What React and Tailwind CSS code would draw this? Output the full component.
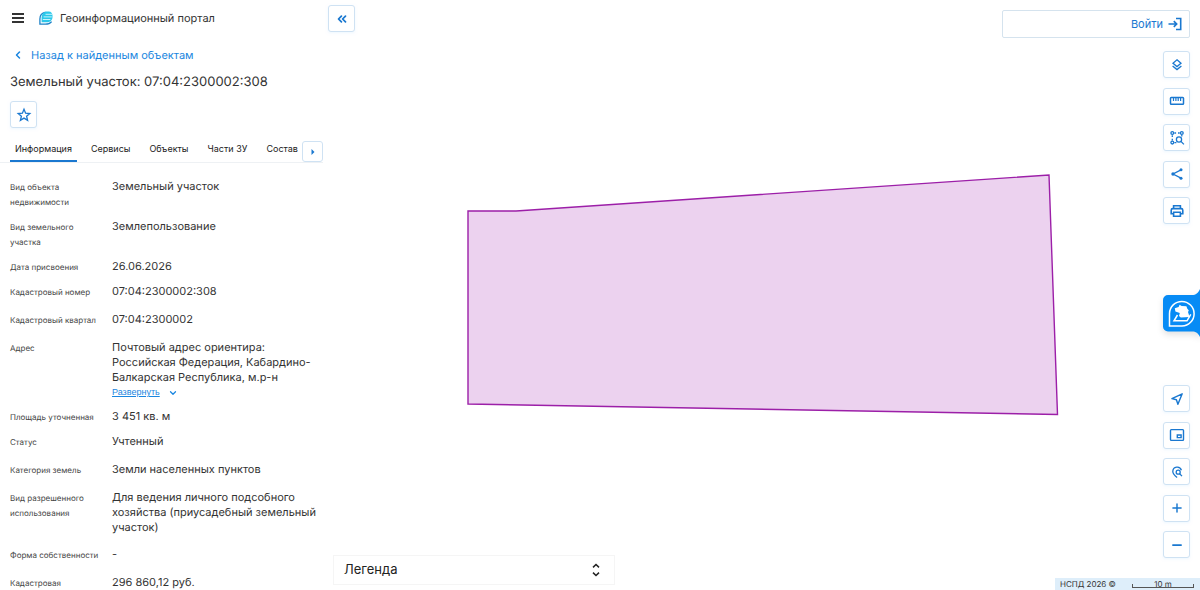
import { ChevronDown, ChevronLeft, ChevronsLeft, Minus, Plus } from 'lucide-react';

const tabs = ['Информация', 'Сервисы', 'Объекты', 'Части ЗУ', 'Состав'];

const details = [
  { label: 'Вид объекта недвижимости', value: 'Земельный участок', compact: true },
  { label: 'Вид земельного участка', value: 'Землепользование', compact: true },
  { label: 'Дата присвоения', value: '26.06.2026', compact: true },
  { label: 'Кадастровый номер', value: '07:04:2300002:308' },
  { label: 'Кадастровый квартал', value: '07:04:2300002' },
  {
    label: 'Адрес',
    value: 'Почтовый адрес ориентира: Российская Федерация, Кабардино-Балкарская Республика, м.р-н',
    compact: true,
    expandable: true,
  },
  { label: 'Площадь уточненная', value: '3 451 кв. м', compact: true },
  { label: 'Статус', value: 'Учтенный' },
  { label: 'Категория земель', value: 'Земли населенных пунктов' },
  {
    label: 'Вид разрешенного использования',
    value: 'Для ведения личного подсобного хозяйства (приусадебный земельный участок)',
  },
  { label: 'Форма собственности', value: '-' },
  { label: 'Кадастровая', value: '296 860,12 руб.' },
];

const iconProps = {
  viewBox: '0 0 16 16',
  fill: 'none',
  stroke: 'currentColor',
  strokeWidth: 1.4,
  className: 'w-4 h-4',
  'aria-hidden': true,
};

function LayersIcon() {
  return (
    <svg {...iconProps} strokeWidth={1.3}>
      <path d="M8 2.800 12 6.200 8 9.600 4 6.200Z" />
      <path d="M3.600 8.900 8 12.600 12.400 8.900" />
    </svg>
  );
}

function RulerIcon() {
  return (
    <svg {...iconProps} strokeWidth={1.5}>
      <rect x="1.500" y="4.500" width="13" height="6.800" rx="0.800" />
      <path d="M4.500 5v3M6.900 5v3M9.200 5v3M11.600 5v3" strokeWidth="1.200" />
    </svg>
  );
}

function AreaSearchIcon() {
  return (
    <svg {...iconProps} strokeWidth={1.3}>
      <circle cx="3.300" cy="3" r="1.400" />
      <circle cx="12.800" cy="3" r="1.400" />
      <circle cx="3.300" cy="12.600" r="1.400" />
      <path d="M5.400 3h1.700M9 3h1.700M3.300 5.200v1.700M3.300 8.800v1.700M12.800 5v1.400M5.400 12.600h2" />
      <circle cx="10" cy="9.500" r="2.600" />
      <path d="m11.900 11.400 3 3" />
    </svg>
  );
}

function ShareIcon() {
  return (
    <svg {...iconProps} strokeWidth={1.3}>
      <path d="M12 3.800 4 8l8 4.200" />
      <circle cx="12" cy="3.800" r="1.500" fill="currentColor" stroke="none" />
      <circle cx="4" cy="8" r="1.700" fill="currentColor" stroke="none" />
      <circle cx="12" cy="12.200" r="1.500" fill="currentColor" stroke="none" />
    </svg>
  );
}

function PrintIcon() {
  return (
    <svg {...iconProps} strokeWidth={1.6}>
      <path d="M4.600 5.500V2.800h6.800v2.700" />
      <path d="M4.400 10.800H2.200V7.200c0-1 .6-1.600 1.600-1.600h8.400c1 0 1.600.6 1.600 1.600v3.600h-2.200" />
      <path d="M4.600 9.200h6.800v4H4.600z" />
    </svg>
  );
}

function LocateIcon() {
  return (
    <svg {...iconProps}>
      <path d="M13.200 2.800 2.900 7.600l4.500 1.100 1.500 4.600Z" strokeLinejoin="round" />
    </svg>
  );
}

function OverviewIcon() {
  return (
    <svg {...iconProps}>
      <rect x="1.500" y="2.600" width="13" height="10.800" rx="0.800" />
      <path d="M8.300 8h3.800v2.600H8.300z" />
    </svg>
  );
}

function PinSearchIcon() {
  return (
    <svg {...iconProps} strokeWidth={1.3}>
      <path d="M12.400 6.200A4.400 4.400 0 0 0 3.800 7.400c0 2.400 2 4.200 4.300 6" />
      <circle cx="9.200" cy="8.200" r="2" />
      <path d="m10.600 9.700 2.400 2.400" />
    </svg>
  );
}

function PortalLogo() {
  return (
    <svg viewBox="0 0 16 16" className="w-4 h-4" fill="none" aria-hidden="true">
      <path d="M7.600 2.200C4 2.900 1.900 5.600 1.900 9v5.200h5.400c2.800 0 5-.9 6.300-2.600" stroke="#1f83c8" strokeWidth="1.300" />
      <path
        d="M8.200 1.400h2.600c2.300 0 3.700 1.700 3.700 4v1.300c0 3.100-2 5.500-5.200 5.500H3.600V7.400c0-3.300 1.700-5.600 4.600-6Z"
        fill="#2cc8ea"
      />
      <path d="M7.500 4.300h6.800M5.600 6.900h8.200M4.800 9.500h7.600" stroke="#d9f7ff" strokeWidth="0.900" />
    </svg>
  );
}

function MapButton({ label, children }) {
  return (
    <button
      type="button"
      aria-label={label}
      className="w-[27px] h-[27px] shrink-0 flex items-center justify-center bg-white border border-[#cfe2f3] rounded-[3px] shadow-sm shadow-sky-50 text-[#1a78d0]"
    >
      {children}
    </button>
  );
}

function DetailRow({ item }) {
  return (
    <div className={`flex ${item.compact ? 'pb-[9px]' : 'pb-3'}`}>
      <dt className="w-[102px] shrink-0 pt-px pr-2 text-[8px] leading-[15px] text-[#454545]">{item.label}</dt>
      <dd className="flex-1 min-w-0 text-[11px] leading-[15px] text-[#333]">
        {item.value}
        {item.expandable && (
          <button
            type="button"
            className="flex items-center gap-2 h-[15px] font-['Liberation_Sans'] text-[9px] text-[#1a86e0]"
          >
            <span className="underline">Развернуть</span>
            <ChevronDown className="w-2.5 h-2.5" strokeWidth={3} />
          </button>
        )}
      </dd>
    </div>
  );
}

function Sidebar() {
  return (
    <aside className="w-[323px] shrink-0 overflow-hidden">
      <header className="flex items-center h-9 pl-3">
        <button type="button" aria-label="Меню" className="w-3 h-3 mr-[14px] flex flex-col justify-center gap-[2px]">
          <span className="w-full h-0.5 bg-[#333]" />
          <span className="w-full h-0.5 bg-[#333]" />
          <span className="w-full h-0.5 bg-[#333]" />
        </button>
        <PortalLogo />
        <span className="ml-[6px] text-[11px] text-[#333]">Геоинформационный портал</span>
      </header>

      <a href="#results" className="flex items-center gap-[7px] h-[38px] pl-3 text-[11px] text-[#1a86e0]">
        <ChevronLeft className="w-3 h-3" strokeWidth={3} />
        Назад к найденным объектам
      </a>

      <h1 className="pl-[10px] text-[13px] leading-4 text-[#333]">Земельный участок: 07:04:2300002:308</h1>

      <div className="pl-[10px] pt-[11px]">
        <MapButton label="В избранное">
          <svg {...iconProps} strokeWidth={1.3}>
            <path d="m8 2.300 1.600 3.900 4.200.3-3.200 2.700 1 4.100L8 11.100l-3.600 2.200 1-4.100-3.200-2.700 4.200-.3Z" />
          </svg>
        </MapButton>
      </div>

      <nav className="flex items-end mt-2 pl-[10px] border-b border-[#eef1f4]">
        <div className="flex flex-1 min-w-0 gap-[9px] overflow-hidden">
          {tabs.map((tab, i) => (
            <button
              key={tab}
              type="button"
              className={`h-[26px] pt-0.5 px-[5px] shrink-0 border-b-2 text-[9px] text-[#222] ${
                i === 0 ? 'border-[#1a78d0]' : 'border-transparent'
              }`}
            >
              {tab}
            </button>
          ))}
        </div>
        <button
          type="button"
          aria-label="Следующие вкладки"
          className="w-[21px] h-[21px] shrink-0 flex items-center justify-center bg-white border border-[#cfe2f3] rounded-[3px] text-[#1a78d0]"
        >
          <svg viewBox="0 0 4 6" className="w-1 h-1.5" fill="currentColor" aria-hidden="true">
            <path d="M.5 0 3.500 3 .5 6Z" />
          </svg>
        </button>
      </nav>

      <dl className="pt-4 pl-[10px] pr-1">
        {details.map((item) => (
          <DetailRow key={item.label} item={item} />
        ))}
      </dl>
    </aside>
  );
}

function MapView() {
  return (
    <main className="relative flex-1 min-w-0 overflow-hidden">
      <svg
        viewBox="0 0 877 590"
        preserveAspectRatio="xMidYMid slice"
        className="w-full h-full"
        role="img"
        aria-label="Границы участка"
      >
        <path d="M145 211h48L726 175l8.500 239.500L145 404Z" fill="#ecd2ef" stroke="#9c1fa8" strokeWidth="1.400" />
      </svg>

      <div className="absolute left-[5px] top-[5px]">
        <MapButton label="Свернуть панель">
          <ChevronsLeft className="w-[14px] h-[14px]" strokeWidth={3} />
        </MapButton>
      </div>

      <div className="absolute right-[10px] top-[10px] flex flex-col items-end">
        <div className="w-[188px] h-7 px-1.5 flex items-center justify-end bg-white border border-[#d5e3ee] rounded-[2px]">
          <button type="button" className="flex items-center gap-1 text-[11px] text-[#1a78d0]">
            Войти
            <svg {...iconProps} strokeWidth={1.6}>
              <path d="M9 2.500h4.700v11H9M1.500 8h8M6.800 5.100 9.700 8l-2.900 2.900" />
            </svg>
          </button>
        </div>
        <div className="flex flex-col justify-between h-[173px] mt-[13px]">
          <MapButton label="Слои"><LayersIcon /></MapButton>
          <MapButton label="Измерения"><RulerIcon /></MapButton>
          <MapButton label="Поиск по области"><AreaSearchIcon /></MapButton>
          <MapButton label="Поделиться"><ShareIcon /></MapButton>
          <MapButton label="Печать"><PrintIcon /></MapButton>
        </div>
      </div>

      <button type="button" aria-label="Помощник" className="absolute right-0 top-[289px] drop-shadow-md">
        <svg viewBox="0 0 37 48" className="w-[37px] h-12" fill="none" aria-hidden="true">
          <path d="M37 0v48c-2-4-4-5.500-8-5.500H5a5 5 0 0 1-5-5V11a5 5 0 0 1 5-5h24c4 0 6-2 8-6Z" fill="#078bf5" />
          <path d="M6.500 37V24.500A12.300 12.300 0 1 1 19 37Z" stroke="#fff" strokeWidth="1.500" />
          <path
            d="m11.800 19.200 3.800-1.200 1-2.200 2 1.200 4.800.2.800 2.400 1.600 2-.8 1.400 1.600 5-8.800.4-1.800-1.400.8-3-4.400-1.600Z"
            fill="#fff"
          />
          <path d="m14.500 26-3.500 5.800h13l3.800-6.400" stroke="#fff" strokeWidth="1.500" />
        </svg>
      </button>

      <div className="absolute right-[10px] bottom-8 flex flex-col justify-between h-[173px]">
        <MapButton label="Моё местоположение"><LocateIcon /></MapButton>
        <MapButton label="Обзорная карта"><OverviewIcon /></MapButton>
        <MapButton label="Найти точку"><PinSearchIcon /></MapButton>
        <MapButton label="Приблизить"><Plus className="w-3.5 h-3.5" strokeWidth={2.5} /></MapButton>
        <MapButton label="Отдалить"><Minus className="w-3.5 h-3.5" strokeWidth={3} /></MapButton>
      </div>

      <button
        type="button"
        aria-expanded="false"
        className="absolute left-[10px] bottom-[5px] w-[282px] h-[30px] px-[10px] flex items-center justify-between bg-white border border-[#f5f5f5] text-[13px] text-[#222]"
      >
        Легенда
        <svg {...iconProps} strokeWidth={1.5}>
          <path d="M5 5.400 8 2.500l3 2.900M5 10.600l3 2.900 3-2.900" />
        </svg>
      </button>

      <footer className="absolute right-0 bottom-0 flex items-center w-[145px] h-3 pl-[5px] pr-[6px] bg-[#deeefa] text-[8px] leading-3 text-[#333]">
        <span>НСПД 2026 ©</span>
        <span className="relative ml-auto w-[62px] text-center">
          10 m
          <span className="absolute inset-x-0 bottom-[2px] h-1 border border-t-0 border-[#555]" />
        </span>
      </footer>
    </main>
  );
}

export default function App() {
  return (
    <div className="flex h-screen overflow-hidden bg-white font-[Inter,sans-serif] [text-rendering:geometricPrecision]">
      <Sidebar />
      <MapView />
    </div>
  );
}
